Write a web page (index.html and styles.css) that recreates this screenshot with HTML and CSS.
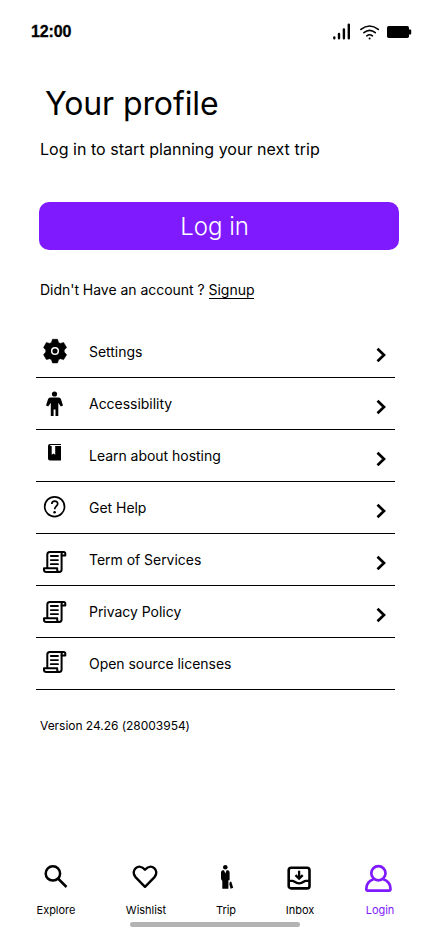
FILE: index.html
```html
<!DOCTYPE html>
<html lang="en">
<head>
<meta charset="utf-8">
<meta name="viewport" content="width=device-width, initial-scale=1">
<title>Your profile</title>
<link rel="stylesheet" href="styles.css">
</head>
<body>
<svg class="defs" aria-hidden="true">
  <symbol id="scroll" viewBox="0 0 24 24">
    <g fill="none" stroke="#000" stroke-width="2" stroke-linejoin="round" stroke-linecap="round">
      <path d="M4.3 17V4Q4.3 1.5 6.8 1.5H20.4Q22.3 1.5 22.3 3.2V5H18.6V19.2Q18.6 21.6 16.3 21.6H3.4Q1 21.6 1 19.4V17.8H14.2V19.4Q14.2 21.6 16.3 21.6"/>
      <path d="M18.6 5V3.3Q18.6 1.5 20.4 1.5"/>
      <path d="M7.8 5.6H15M7.8 9.7H15M7.8 13.8H15" stroke-width="1.8"/>
    </g>
  </symbol>
  <symbol id="chevron" viewBox="0 0 10 16">
    <path d="M1.5 1.8 8 8 1.5 14.2" fill="none" stroke="#000" stroke-width="2.7"/>
  </symbol>
</svg>
<div class="screen">
  <header class="status">
    <span class="time">12:00</span>
    <svg width="80" height="20" viewBox="0 0 80 20">
      <g fill="none" stroke="#000" stroke-linecap="round">
        <path stroke-width="2.4" d="M2.3 16.4V17.2M7 13V17.2M11.9 8.5V17.2M16.8 3.6V17.2"/>
        <path stroke-width="1.6" d="M28.9 8.4Q37.6 1.5 46.3 8.4M31.9 11.7Q37.6 7.1 43.3 11.7M34.8 14.8Q37.6 12.6 40.4 14.8"/>
      </g>
      <circle cx="37.6" cy="17.6" r="1"/>
      <rect x="55" y="5" width="22" height="12" rx="1.8"/>
      <rect x="76" y="8.4" width="3.2" height="5" rx=".7"/>
    </svg>
  </header>
  <main>
    <h1>Your profile</h1>
    <p class="lead">Log in to start planning your next trip</p>
    <button class="login">Log in</button>
    <p class="signup">Didn't Have an account ? <a>Signup</a></p>
    <ul class="menu">
      <li>
        <svg class="icon" viewBox="0 0 38 51"><path d="M16.5 13.3H21.5L22.5 16.4 24.3 17.4 27.6 16.6 30.6 21.5 28.2 24V26L30.6 28.7 27.6 33.6 24.3 32.7 22.5 33.8 21.5 36.9H16.5L15.5 33.8 13.7 32.7 10.4 33.6 7.6 28.7 9.8 26V24L7.6 21.5 10.4 16.6 13.7 17.4 15.5 16.4Z" stroke="#000" stroke-width=".6" stroke-linejoin="round"/><circle cx="19" cy="25" r="3.3" fill="none" stroke="#fff" stroke-width="1.5"/></svg>
        <span>Settings</span><svg class="chev"><use href="#chevron"/></svg>
      </li>
      <li>
        <svg class="icon" viewBox="0 0 38 51"><circle cx="18.5" cy="16" r="2.6"/><path d="M14.3 19.5H22.7Q24.3 19.5 24.9 21L27 27.4 24.8 28.6 22.3 24.8V38H19.5V31.5H17.6V38H14.8V24.8L12.2 28.6 10 27.4 12.1 21Q12.7 19.5 14.3 19.5Z"/></svg>
        <span>Accessibility</span><svg class="chev"><use href="#chevron"/></svg>
      </li>
      <li>
        <svg class="icon" viewBox="0 0 38 51"><path d="M14 14H25V15H14.3V16H25V30.6H14Q12 30.6 12 28.6V16Q12 14 14 14Z"/><path d="M15.7 15.8V24.8L17.5 23.6 19.2 24.8V15.8Z" fill="#fff"/></svg>
        <span>Learn about hosting</span><svg class="chev"><use href="#chevron"/></svg>
      </li>
      <li>
        <svg class="icon" viewBox="0 0 38 51"><g fill="none" stroke="#000" stroke-width="1.7"><circle cx="18.6" cy="24.7" r="9.9"/><path d="M15.8 22.1C15.8 18.2 21.7 18.2 21.7 21.8 21.7 24.2 18.7 24.1 18.7 27.3"/></g><circle cx="18.6" cy="30.3" r="1.3"/></svg>
        <span>Get Help</span><svg class="chev"><use href="#chevron"/></svg>
      </li>
      <li>
        <svg class="icon" viewBox="0 0 38 51"><use href="#scroll" x="7" y="16.4" width="24" height="24"/></svg>
        <span>Term of Services</span><svg class="chev"><use href="#chevron"/></svg>
      </li>
      <li>
        <svg class="icon" viewBox="0 0 38 51"><use href="#scroll" x="7" y="14.4" width="24" height="24"/></svg>
        <span>Privacy Policy</span><svg class="chev"><use href="#chevron"/></svg>
      </li>
      <li>
        <svg class="icon" viewBox="0 0 38 51"><use href="#scroll" x="7" y="12.4" width="24" height="24"/></svg>
        <span>Open source licenses</span>
      </li>
    </ul>
    <p class="version">Version 24.26 (28003954)</p>
  </main>
  <nav>
    <a><svg viewBox="0 0 32 32"><g fill="none" stroke="#000" stroke-width="2.5"><circle cx="12.9" cy="11.4" r="7.2"/><path d="M18 16.5 26.5 25"/></g></svg>Explore</a>
    <a><svg viewBox="0 0 32 32"><path d="M15 24.8 5.5 15.1C-.2 8.5 8.8.4 15 7.7 21.2.4 30.2 8.5 24.5 15.1Z" fill="none" stroke="#000" stroke-width="2.4" stroke-linejoin="round"/></svg>Wishlist</a>
    <a><svg viewBox="0 0 32 32"><circle cx="15.3" cy="5.2" r="2.3"/><path d="M12.5 8.2H14L15.3 11.5 16.6 8.2H18Q19.6 8.5 19.6 10.5V18.3H18.4V26.8H12.3V19L11 17V10.5Q11 8.5 12.5 8.2Z"/><path d="M19.8 20 21.2 19.6 23.2 25.7 20.6 26.8 19.3 22Z"/></svg>Trip</a>
    <a><svg viewBox="0 0 32 32"><g fill="none" stroke="#000" stroke-width="2.6"><rect x="4.7" y="5.8" width="20.8" height="20.6" rx="2.5"/><path d="M4.7 18.8H8.5C10.5 18.8 11 21.3 15.1 21.3S19.7 18.8 21.7 18.8H25.5M15.1 8.8V16M11.5 13.1 15.1 16.7 18.7 13.1" stroke-width="2.3"/></g></svg>Inbox</a>
    <a class="active"><svg viewBox="0 0 32 32"><g fill="none" stroke="#7f1aff" stroke-width="2.7"><circle cx="14.4" cy="11.2" r="7.1"/><path d="M9.5 17.3C5 18.8 2.3 22 2.3 27Q2.3 28.7 4 28.7H24.8Q26.5 28.7 26.5 27C26.5 22 23.8 18.8 19.3 17.3"/></g></svg>Login</a>
  </nav>
  <div class="home"></div>
</div>
</body>
</html>
```
FILE: styles.css
```css
* { box-sizing: border-box; }
body { margin: 0; background: #fff; color: #000; font-family: Inter, "Liberation Sans", sans-serif; font-weight: 400; }
.defs { display: none; }
.screen { width: 430px; height: 932px; display: flex; flex-direction: column; overflow: hidden; }
.status { display: flex; justify-content: space-between; padding: 21px 18px 0 31px; height: 62px; }
.time { font: 700 16px/21px "Liberation Sans", sans-serif; letter-spacing: -0.15px; -webkit-text-stroke: 0.3px #000; }
main { flex: 1; padding: 0 31px 0 36px; }
h1 { margin: 22px 0 0 9px; font-size: 32px; line-height: 40px; font-weight: 375; letter-spacing: -0.1px; }
.lead { margin: 15px 0 0 4px; font-size: 16px; line-height: 20px; letter-spacing: 0.03px; }
.login { display: block; width: 360px; height: 48px; margin: 43px 0 0 3px; padding: 1px 9px 0 0; border: 0; border-radius: 10px; background: #7f1aff; color: #fff; font: 360 24px/47px Inter, sans-serif; }
.signup { margin: 30px 0 0 4px; font-size: 14px; line-height: 20px; letter-spacing: -0.03px; }
.signup a { display: inline-block; line-height: 17px; border-bottom: 1px solid #000; }
.menu { list-style: none; margin: 26px 0 0; padding: 0; width: 359px; }
.menu li { display: flex; height: 52px; border-bottom: 1px solid #000; }
.icon { width: 38px; height: 51px; }
.menu span { flex: 1; padding-left: 15px; font-size: 14px; line-height: 52px; letter-spacing: -0.03px; }
.chev { width: 10px; height: 16px; margin: 21px 9px 0 0; }
.version { margin: 26px 0 0 4px; font-size: 12px; line-height: 20px; letter-spacing: -0.03px; }
nav { display: grid; grid-template-columns: 112px 68px 92px 56px 104px; height: 60px; }
nav a { display: flex; flex-direction: column; align-items: center; font-size: 11px; line-height: 16px; letter-spacing: -0.03px; }
nav svg { width: 32px; height: 32px; margin-bottom: 8px; }
nav .active { color: #7f1aff; }
.home { width: 170px; height: 5px; margin: 0 0 5px 130px; border-radius: 3px; background: #b3b3b3; }
```
